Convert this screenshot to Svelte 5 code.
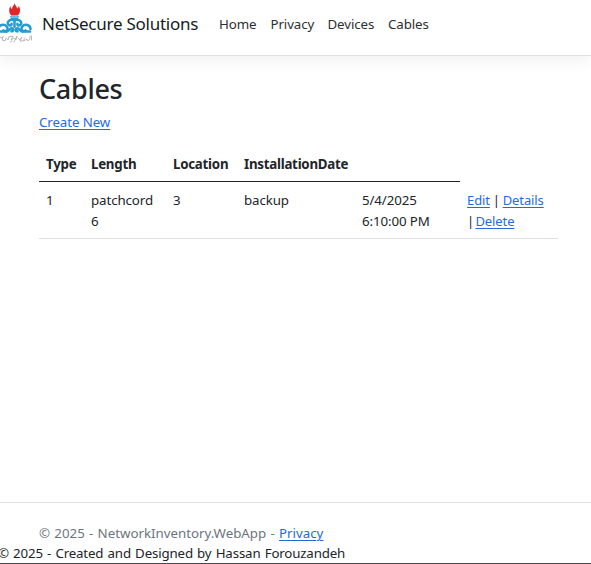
<script>
  const nav = ['Home', 'Privacy', 'Devices', 'Cables'];
  const columns = ['Type', 'Length', 'Location', 'InstallationDate'];
</script>

<div class="page">
  <header>
    <svg class="logo" width="33" height="44" viewBox="0 0 33 44" aria-hidden="true">
      <path d="M14.7 3C15.2 6 17 6 17 8.5C18 7.8 18.8 7 18.8 5.8C20.8 9.5 20.4 13 17.8 15.5H11.2C8.8 13 8.4 9.5 10.4 6C10.6 7.5 11 8.5 12 9C12 6.5 14.2 5.5 14.7 3Z" fill="#e3242b" />
      <path d="M9.8 16.8H19.2" stroke="#259bd4" stroke-width="1" />
      <g fill="none" stroke="#249bd3" stroke-width="2.5" stroke-linecap="round">
        <path d="M11.8 18.8H17.2M14.5 19V27" />
        <path d="M13.8 20C10 19 7 21.5 8 24C9 26.3 12 25.7 11.6 23.8M15.2 20C19 19 22 21.5 21 24C20 26.3 17 25.7 17.4 23.8" />
        <path d="M-1.5 29C-1.5 24.8 4.4 23.3 6.8 26.7C9 30.2 5.3 32.2 3.4 30.4M30.5 29C30.5 24.8 24.6 23.3 22.2 26.7C20 30.2 23.7 32.2 25.6 30.4" />
        <path d="M-1 31.6H5.5C9.4 32.6 9 27.8 11.8 28.3C14 28.9 13.3 31.8 11.5 31.3M30 31.6H23.5C19.6 32.6 20 27.8 17.2 28.3C15 28.9 15.7 31.8 17.5 31.3" />
      </g>
      <g fill="none" stroke="#aaa" stroke-width=".8" stroke-linecap="round">
        <path d="M0 37L2 38L3 36.5L2 40L5 41L6 38L8 40L9 37M9 37L13 36L11 40L14 38L16 40L17 36L14 42M18 38L20 40L22 37L20 41L23 41L25 38M24 41L27 39L28 41L30 39V36M31.5 36V40M10 42L12 41" />
      </g>
    </svg>
    <a class="brand" href="#home">NetSecure Solutions</a>
    <nav>
      {#each nav as item}<a class={item.toLowerCase()} href="#{item}">{item}</a>{/each}
    </nav>
  </header>

  <main>
    <h1>Cables</h1>
    <p><a class="create" href="#create">Create New</a></p>
    <table>
      <colgroup><col style="width:45px" /><col style="width:82px" /><col style="width:71px" /><col style="width:118px" /><col style="width:105px" /><col style="width:98px" /></colgroup>
      <thead>
        <tr>{#each columns as c}<th>{c}</th>{/each}<th></th></tr>
      </thead>
      <tbody>
        <tr>
          <td>1</td><td>patchcord<br />6</td><td>3</td><td>backup</td>
          <td>5/4/2025<br />6:10:00 PM</td>
          <td class="actions"><a href="#edit">Edit</a> | <a href="#details">Details</a><br />| <a href="#delete">Delete</a></td>
        </tr>
      </tbody>
    </table>
  </main>

  <footer>© 2025 - NetworkInventory.WebApp - <a href="#privacy">Privacy</a></footer>
  <div class="credit">© 2025 - Created and Designed by Hassan Forouzandeh</div>
</div>

<style>
  :global(body) { background: #fff; overflow: hidden; }
  .page {
    box-sizing: border-box; width: 591px; height: 564px; overflow: hidden;
    display: flex; flex-direction: column; border-bottom: 1px solid #55424d;
    font: 13.3px/21px "Noto Sans", "Open Sans", sans-serif; color: #212529;
  }
  a { color: #1f6bdc; text-underline-offset: 1.5px; text-decoration-thickness: 1px; }
  header {
    height: 55px; flex: none; display: flex; align-items: flex-start;
    border-bottom: 1px solid #dee0e2; box-shadow: 0 6px 13px rgba(0,0,0,.05);
  }
  .logo { flex: none; }
  .brand { margin: 11px 0 0 9px; width: 177px; font-size: 17px; line-height: 26px; letter-spacing: -.25px; color: #171a1e; text-decoration: none; white-space: nowrap; }
  nav { display: flex; padding-top: 13.5px; }
  nav a { color: #2b2f33; text-decoration: none; width: 57px; letter-spacing: -.1px; }
  nav .home { width: 51.5px; }
  nav .devices { width: 60.5px; }
  main { padding: 16px 33px 0 39px; height: 430px; flex: none; }
  h1 { margin: 0; font-size: 27px; line-height: 34px; font-weight: 550; letter-spacing: -.3px; }
  p { margin: 6px 0 0; }
  .create { letter-spacing: -.1px; }
  table { margin-top: 21px; width: 519px; table-layout: fixed; border-collapse: separate; border-spacing: 0; }
  th { text-align: left; padding: 0 0 6px 7px; height: 21px; border-bottom: 1px solid #212529; font-weight: 700; letter-spacing: -.25px; white-space: nowrap; }
  td { padding: 8px 0 6px 7px; height: 42px; vertical-align: top; border-bottom: 1px solid #dee2e6; letter-spacing: -.1px; white-space: nowrap; }
  .actions { letter-spacing: -.1px; word-spacing: -.4px; font-size: 13px; }
  .actions a:last-child { margin-left: -1.5px; }
  footer { border-top: 1px solid #dee2e6; padding: 20px 39px 0; height: 20px; flex: none; color: #6c757d; word-spacing: .8px; white-space: nowrap; }
  .credit { margin-left: -2px; word-spacing: .9px; letter-spacing: -.16px; white-space: nowrap; }
</style>
